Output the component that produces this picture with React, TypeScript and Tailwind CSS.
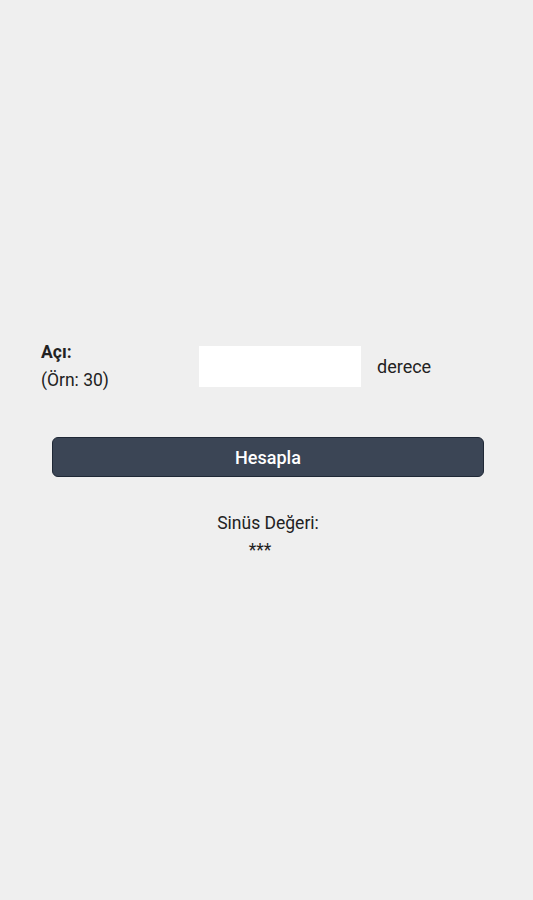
export default function App() {
  return (
    <div
      className="min-h-screen w-full bg-[#efefef] flex flex-col justify-center text-[#222]"
      style={{ fontFamily: "Roboto, 'Noto Sans', sans-serif" }}
    >
      <div className="flex items-center pl-[41px] mt-[2px]">
        <div className="w-[158px] flex flex-col text-[17.5px]">
          <span className="font-bold leading-[22px]">Açı:</span>
          <span className="leading-[22px] mt-[6px]">(Örn: 30)</span>
        </div>
        <input
          type="text"
          className="w-[162px] h-[41px] bg-white outline-none px-2 text-[16px]"
        />
        <span className="ml-[16px] text-[18px]">derece</span>
      </div>
      <button className="ml-[52px] mt-[46px] w-[432px] h-[40px] rounded-[6px] bg-[#3b4555] border border-[#1f2836] text-white text-[18px] font-medium">
        Hesapla
      </button>
      <div className="mt-[35px] flex flex-col items-center text-[17.5px] leading-[22px] pl-[3px]">
        <span>Sinüs Değeri:</span>
        <span className="mt-[5px] mr-[16px]">***</span>
      </div>
    </div>
  );
}
